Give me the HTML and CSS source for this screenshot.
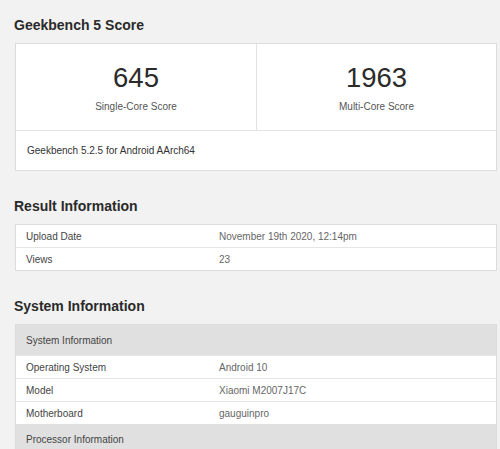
FILE: index.html
```html
<!DOCTYPE html>
<html>
<head>
<meta charset="utf-8">
<link rel="stylesheet" href="styles.css">
</head>
<body>
<div class="page">
  <h2 class="title t1">Geekbench 5 Score</h2>
  <div class="card">
    <div class="scores">
      <div class="score">
        <div class="num">645</div>
        <div class="lbl">Single-Core Score</div>
      </div>
      <div class="score">
        <div class="num">1963</div>
        <div class="lbl">Multi-Core Score</div>
      </div>
    </div>
    <div class="card-foot">Geekbench 5.2.5 for Android AArch64</div>
  </div>

  <h2 class="title t2">Result Information</h2>
  <div class="table">
    <div class="row"><div class="k">Upload Date</div><div class="v">November 19th 2020, 12:14pm</div></div>
    <div class="row"><div class="k">Views</div><div class="v">23</div></div>
  </div>

  <h2 class="title t3">System Information</h2>
  <div class="table">
    <div class="row head"><div class="k">System Information</div></div>
    <div class="row"><div class="k">Operating System</div><div class="v">Android 10</div></div>
    <div class="row"><div class="k">Model</div><div class="v">Xiaomi M2007J17C</div></div>
    <div class="row"><div class="k">Motherboard</div><div class="v">gauguinpro</div></div>
    <div class="row head"><div class="k">Processor Information</div></div>
  </div>
</div>
</body>
</html>
```
FILE: styles.css
```css
html, body {
  margin: 0;
  padding: 0;
  background: #f2f2f2;
  font-family: "Liberation Sans", Arial, sans-serif;
  color: #333;
}
.page {
  padding: 0 3px 0 15px;
}
.title {
  margin: 0 0 0 -1px;
  font-size: 14px;
  font-weight: bold;
  color: #2a2a2a;
  line-height: 20px;
}
.t1 { padding-top: 15px; padding-bottom: 8px; }
.t2 { padding-top: 25px; padding-bottom: 8px; }
.t3 { padding-top: 25px; padding-bottom: 8px; }
.card {
  background: #fff;
  border: 1px solid #dcdcdc;
}
.scores {
  display: grid;
  grid-template-columns: 240px 1fr;
  border-bottom: 1px solid #e2e2e2;
}
.score {
  height: 86px;
  display: flex;
  flex-direction: column;
  align-items: center;
  padding-top: 19px;
  box-sizing: border-box;
}
.score + .score { border-left: 1px solid #e2e2e2; }
.num {
  font-size: 27.5px;
  line-height: 30px;
  color: #2b2b2b;
}
.lbl {
  font-size: 10px;
  line-height: 14px;
  margin-top: 7px;
  color: #555;
}
.card-foot {
  height: 39px;
  display: flex;
  align-items: center;
  padding-left: 11px;
  font-size: 10px;
  color: #333;
}
.table {
  background: #fff;
  border: 1px solid #dcdcdc;
}
.row {
  display: grid;
  grid-template-columns: 193px 1fr;
  height: 22px;
  align-items: center;
  padding-left: 10px;
  font-size: 10px;
  border-top: 1px solid #e6e6e6;
}
.row:first-child { border-top: none; }
.k { color: #444; }
.v { color: #666; }
.row.head {
  background: #e0e0e0;
  height: 30px;
  border-top: none;
}
```
